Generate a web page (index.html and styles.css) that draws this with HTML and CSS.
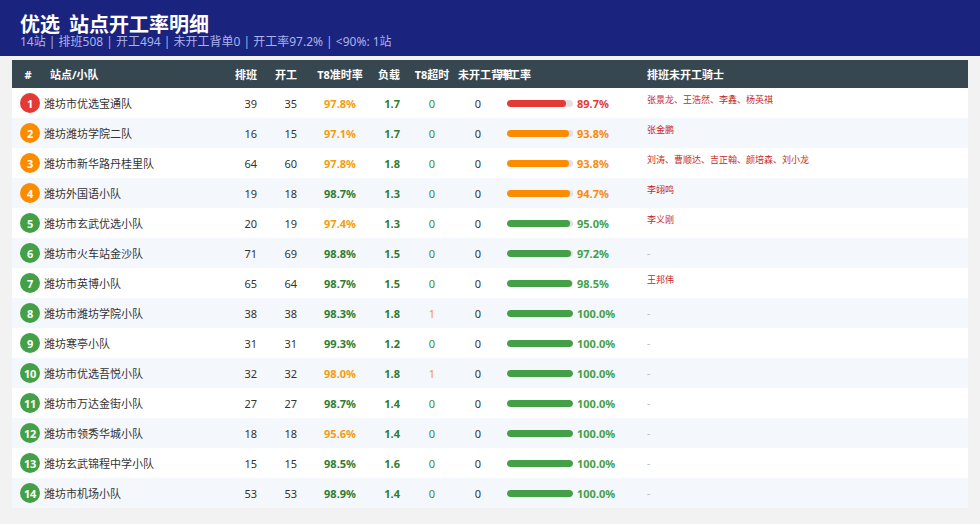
FILE: index.html
```html
<!DOCTYPE html>
<html lang="zh">
<head>
<meta charset="utf-8">
<title>站点开工率明细</title>
<link rel="stylesheet" href="styles.css">
</head>
<body>
<header class="top">
  <div class="title">优选 &nbsp;站点开工率明细</div>
  <div class="sub">14站 | 排班508 | 开工494 | 未开工背单0 | 开工率97.2% | &lt;90%: 1站</div>
</header>
<section class="table">
  <div class="row head">
    <div class="c c1">#</div>
    <div class="c c2">站点/小队</div>
    <div class="c c3">排班</div>
    <div class="c c4">开工</div>
    <div class="c c5">T8准时率</div>
    <div class="c c6">负载</div>
    <div class="c c7">T8超时</div>
    <div class="c c8"><span class="over">未开工背单</span></div>
    <div class="c c9">开工率</div>
    <div class="c c10">排班未开工骑士</div>
  </div>

  <div class="row">
    <div class="c c1"><span class="badge red">1</span></div>
    <div class="c c2">潍坊市优选宝通队</div>
    <div class="c c3">39</div><div class="c c4">35</div>
    <div class="c c5 b org">97.8%</div><div class="c c6 b grn">1.7</div>
    <div class="c c7 lg">0</div><div class="c c8">0</div>
    <div class="c c9"><span class="track"><span class="fill red" style="width:89.7%"></span></span><span class="pct t-red">89.7%</span></div>
    <div class="c c10 riders">张景龙、王浩然、李鑫、杨英祺</div>
  </div>
  <div class="row">
    <div class="c c1"><span class="badge org-bg">2</span></div>
    <div class="c c2">潍坊潍坊学院二队</div>
    <div class="c c3">16</div><div class="c c4">15</div>
    <div class="c c5 b org">97.1%</div><div class="c c6 b grn">1.7</div>
    <div class="c c7 lg">0</div><div class="c c8">0</div>
    <div class="c c9"><span class="track"><span class="fill org-bg" style="width:93.8%"></span></span><span class="pct t-org">93.8%</span></div>
    <div class="c c10 riders">张金鹏</div>
  </div>
  <div class="row">
    <div class="c c1"><span class="badge org-bg">3</span></div>
    <div class="c c2">潍坊市新华路丹桂里队</div>
    <div class="c c3">64</div><div class="c c4">60</div>
    <div class="c c5 b org">97.8%</div><div class="c c6 b grn">1.8</div>
    <div class="c c7 lg">0</div><div class="c c8">0</div>
    <div class="c c9"><span class="track"><span class="fill org-bg" style="width:93.8%"></span></span><span class="pct t-org">93.8%</span></div>
    <div class="c c10 riders">刘涛、曹顺达、吉正翰、颜培森、刘小龙</div>
  </div>
  <div class="row">
    <div class="c c1"><span class="badge org-bg">4</span></div>
    <div class="c c2">潍坊外国语小队</div>
    <div class="c c3">19</div><div class="c c4">18</div>
    <div class="c c5 b grn">98.7%</div><div class="c c6 b grn">1.3</div>
    <div class="c c7 lg">0</div><div class="c c8">0</div>
    <div class="c c9"><span class="track"><span class="fill org-bg" style="width:94.7%"></span></span><span class="pct t-org">94.7%</span></div>
    <div class="c c10 riders">李翊鸣</div>
  </div>
  <div class="row">
    <div class="c c1"><span class="badge grn-bg">5</span></div>
    <div class="c c2">潍坊市玄武优选小队</div>
    <div class="c c3">20</div><div class="c c4">19</div>
    <div class="c c5 b org">97.4%</div><div class="c c6 b grn">1.3</div>
    <div class="c c7 lg">0</div><div class="c c8">0</div>
    <div class="c c9"><span class="track"><span class="fill grn-bg" style="width:95%"></span></span><span class="pct t-grn">95.0%</span></div>
    <div class="c c10 riders">李义刚</div>
  </div>
  <div class="row">
    <div class="c c1"><span class="badge grn-bg">6</span></div>
    <div class="c c2">潍坊市火车站金沙队</div>
    <div class="c c3">71</div><div class="c c4">69</div>
    <div class="c c5 b grn">98.8%</div><div class="c c6 b grn">1.5</div>
    <div class="c c7 lg">0</div><div class="c c8">0</div>
    <div class="c c9"><span class="track"><span class="fill grn-bg" style="width:97.2%"></span></span><span class="pct t-grn">97.2%</span></div>
    <div class="c c10 dash">-</div>
  </div>
  <div class="row">
    <div class="c c1"><span class="badge grn-bg">7</span></div>
    <div class="c c2">潍坊市英博小队</div>
    <div class="c c3">65</div><div class="c c4">64</div>
    <div class="c c5 b grn">98.7%</div><div class="c c6 b grn">1.5</div>
    <div class="c c7 lg">0</div><div class="c c8">0</div>
    <div class="c c9"><span class="track"><span class="fill grn-bg" style="width:98.5%"></span></span><span class="pct t-grn">98.5%</span></div>
    <div class="c c10 riders">王邦伟</div>
  </div>
  <div class="row">
    <div class="c c1"><span class="badge grn-bg">8</span></div>
    <div class="c c2">潍坊市潍坊学院小队</div>
    <div class="c c3">38</div><div class="c c4">38</div>
    <div class="c c5 b grn">98.3%</div><div class="c c6 b grn">1.8</div>
    <div class="c c7 warn">1</div><div class="c c8">0</div>
    <div class="c c9"><span class="track"><span class="fill grn-bg" style="width:100%"></span></span><span class="pct t-grn">100.0%</span></div>
    <div class="c c10 dash">-</div>
  </div>
  <div class="row">
    <div class="c c1"><span class="badge grn-bg">9</span></div>
    <div class="c c2">潍坊寒亭小队</div>
    <div class="c c3">31</div><div class="c c4">31</div>
    <div class="c c5 b grn">99.3%</div><div class="c c6 b grn">1.2</div>
    <div class="c c7 lg">0</div><div class="c c8">0</div>
    <div class="c c9"><span class="track"><span class="fill grn-bg" style="width:100%"></span></span><span class="pct t-grn">100.0%</span></div>
    <div class="c c10 dash">-</div>
  </div>
  <div class="row">
    <div class="c c1"><span class="badge grn-bg">10</span></div>
    <div class="c c2">潍坊市优选吾悦小队</div>
    <div class="c c3">32</div><div class="c c4">32</div>
    <div class="c c5 b org">98.0%</div><div class="c c6 b grn">1.8</div>
    <div class="c c7 warn">1</div><div class="c c8">0</div>
    <div class="c c9"><span class="track"><span class="fill grn-bg" style="width:100%"></span></span><span class="pct t-grn">100.0%</span></div>
    <div class="c c10 dash">-</div>
  </div>
  <div class="row">
    <div class="c c1"><span class="badge grn-bg">11</span></div>
    <div class="c c2">潍坊市万达金街小队</div>
    <div class="c c3">27</div><div class="c c4">27</div>
    <div class="c c5 b grn">98.7%</div><div class="c c6 b grn">1.4</div>
    <div class="c c7 lg">0</div><div class="c c8">0</div>
    <div class="c c9"><span class="track"><span class="fill grn-bg" style="width:100%"></span></span><span class="pct t-grn">100.0%</span></div>
    <div class="c c10 dash">-</div>
  </div>
  <div class="row">
    <div class="c c1"><span class="badge grn-bg">12</span></div>
    <div class="c c2">潍坊市领秀华城小队</div>
    <div class="c c3">18</div><div class="c c4">18</div>
    <div class="c c5 b org">95.6%</div><div class="c c6 b grn">1.4</div>
    <div class="c c7 lg">0</div><div class="c c8">0</div>
    <div class="c c9"><span class="track"><span class="fill grn-bg" style="width:100%"></span></span><span class="pct t-grn">100.0%</span></div>
    <div class="c c10 dash">-</div>
  </div>
  <div class="row">
    <div class="c c1"><span class="badge grn-bg">13</span></div>
    <div class="c c2">潍坊玄武锦程中学小队</div>
    <div class="c c3">15</div><div class="c c4">15</div>
    <div class="c c5 b grn">98.5%</div><div class="c c6 b grn">1.6</div>
    <div class="c c7 lg">0</div><div class="c c8">0</div>
    <div class="c c9"><span class="track"><span class="fill grn-bg" style="width:100%"></span></span><span class="pct t-grn">100.0%</span></div>
    <div class="c c10 dash">-</div>
  </div>
  <div class="row">
    <div class="c c1"><span class="badge grn-bg">14</span></div>
    <div class="c c2">潍坊市机场小队</div>
    <div class="c c3">53</div><div class="c c4">53</div>
    <div class="c c5 b grn">98.9%</div><div class="c c6 b grn">1.4</div>
    <div class="c c7 lg">0</div><div class="c c8">0</div>
    <div class="c c9"><span class="track"><span class="fill grn-bg" style="width:100%"></span></span><span class="pct t-grn">100.0%</span></div>
    <div class="c c10 dash">-</div>
  </div>
</section>
</body>
</html>
```

FILE: styles.css
```css
* { box-sizing: border-box; }
html, body { margin: 0; padding: 0; }
body {
  background: #f2f2f2;
  font-family: "Noto Sans", "Noto Sans CJK SC", sans-serif;
  color: #333;
  width: 980px;
  height: 524px;
  overflow: hidden;
}
.top {
  background: #1a237e;
  height: 56px;
  padding: 13px 20px 0 20px;
}
.title {
  color: #fff;
  font-size: 20px;
  font-weight: 700;
  line-height: 22px;
  font-family: "Noto Sans CJK SC", sans-serif;
}
.sub {
  color: #aab3ea;
  font-size: 12px;
  line-height: 14px;
  font-family: "Noto Sans", "Noto Sans CJK SC", sans-serif;
}
.table {
  margin: 4px 12px 0 12px;
  width: 956px;
}
.row {
  display: grid;
  grid-template-columns: 32px 181px 32px 40px 80px 23px 64px 28px 150px 326px;
  height: 30px;
  font-size: 11px;
  background: #fff;
}
.row:nth-child(odd) { background: #f4f7fc; }
.row.head {
  height: 28px;
  background: #37474f;
  color: #fff;
  font-weight: 700;
}
.c {
  display: flex;
  align-items: center;
  white-space: nowrap;
  min-width: 0;
}
.c1 { justify-content: flex-start; padding-left: 8px; }
.head .c1 { justify-content: center; padding-left: 0; }
.c2 { padding-left: 0; }
.head .c2 { padding-left: 6px; }
.c3, .c4, .c6 { justify-content: flex-end; }
.c5 { justify-content: center; padding-left: 6px; }
.c7 { justify-content: center; }
.c8 { justify-content: center; }
.head .c8 { justify-content: flex-start; overflow: visible; }
.over { margin-left: -6px; }
.c9 { padding-left: 15px; }
.head .c9 { padding-left: 6px; }
.c10 { padding-left: 5px; }
.badge {
  width: 20px;
  height: 20px;
  border-radius: 50%;
  color: #fff;
  font-weight: 700;
  font-size: 11px;
  display: flex;
  align-items: center;
  justify-content: center;
  letter-spacing: -0.3px;
}
.b { font-weight: 700; }
.org { color: #f39c12; }
.grn { color: #2e7d32; }
.lg { color: #3f8a43; }
.warn { color: #f39c12; }
.red { background: #e53935; }
.org-bg { background: #fb8c00; }
.grn-bg { background: #43a047; }
.track {
  width: 66px;
  height: 7px;
  border-radius: 4px;
  background: #e0e0e0;
  display: block;
  overflow: hidden;
  flex: none;
}
.fill {
  display: block;
  height: 100%;
  border-radius: 4px;
}
.pct {
  margin-left: 4px;
  font-weight: 700;
  font-size: 11px;
}
.t-red { color: #e53935; }
.t-org { color: #fb8c00; }
.t-grn { color: #43a047; }
.riders {
  align-items: flex-start;
  padding-top: 6px;
  font-size: 9px;
  line-height: 12px;
  color: #c62828;
  font-family: "Noto Sans CJK SC", sans-serif;
}
.dash { color: #bbb; font-size: 10px; }
```
